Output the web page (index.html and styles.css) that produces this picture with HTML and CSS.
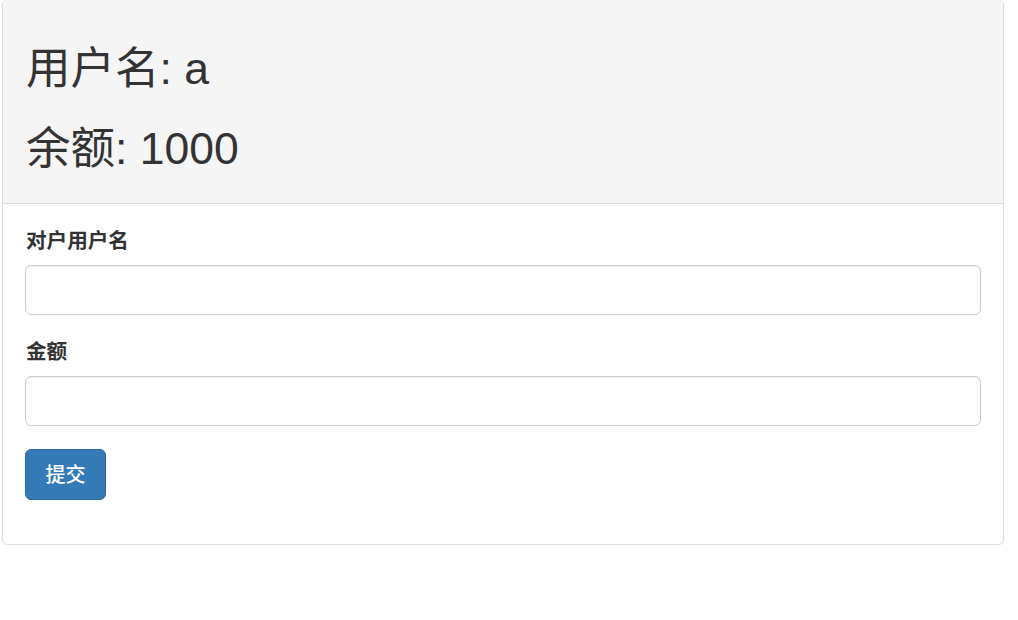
FILE: index.html
```html
<!DOCTYPE html>
<html lang="zh-CN">
<head>
<meta charset="utf-8">
<title>转账</title>
<link rel="stylesheet" href="styles.css">
</head>
<body>
<div class="panel">
  <div class="panel-heading">
    <h2 class="info">用户名: a</h2>
    <h2 class="info">余额: 1000</h2>
  </div>
  <div class="panel-body">
    <form class="form">
      <div class="form-group">
        <label class="label" for="to">对户用户名</label>
        <input class="input" id="to" type="text">
      </div>
      <div class="form-group">
        <label class="label" for="amount">金额</label>
        <input class="input" id="amount" type="text">
      </div>
      <button class="btn" type="button">提交</button>
    </form>
  </div>
</div>
</body>
</html>
```
FILE: styles.css
```css
html, body {
  margin: 0;
  padding: 0;
  background: #fff;
}
body {
  font-family: "Liberation Sans", "Noto Sans CJK SC", sans-serif;
  color: #333;
}
.panel {
  margin: -1px 14px 0 2px;
  border: 1px solid #ddd;
  border-radius: 6px;
  background: #fff;
  box-shadow: 0 1px 2px rgba(0,0,0,0.05);
  overflow: hidden;
}
.panel-heading {
  background: #f5f5f5;
  border-bottom: 1px solid #ddd;
  padding: 29px 23px 14px 23px;
}
.info {
  margin: 0;
  font-size: 44.5px;
  font-weight: 400;
  line-height: 80px;
  color: #333;
}
.panel-body {
  padding: 22px 23px 44px 22px;
}
.form {
  margin: 0;
  display: flex;
  flex-direction: column;
  align-items: flex-start;
  gap: 22px;
}
.form-group {
  align-self: stretch;
}
.label {
  display: block;
  font-size: 20.6px;
  font-weight: 700;
  line-height: 30px;
  margin-bottom: 9px;
  padding-left: 1px;
}
.input {
  display: block;
  box-sizing: border-box;
  width: 956px;
  height: 50px;
  margin: 0;
  padding: 9px 18px;
  border: 1px solid #ccc;
  border-radius: 6px;
  box-shadow: inset 0 1px 1px rgba(0,0,0,0.075);
  font-size: 20px;
  font-family: inherit;
  background: #fff;
}
.btn {
  display: block;
  box-sizing: border-box;
  width: 81px;
  height: 51px;
  margin-top: 1px;
  padding: 0;
  border: 1px solid #2e6da4;
  border-radius: 6px;
  background: #337ab7;
  color: #fff;
  font-family: inherit;
  font-size: 20px;
  font-weight: 500;
  line-height: 1;
  text-align: center;
}
```
